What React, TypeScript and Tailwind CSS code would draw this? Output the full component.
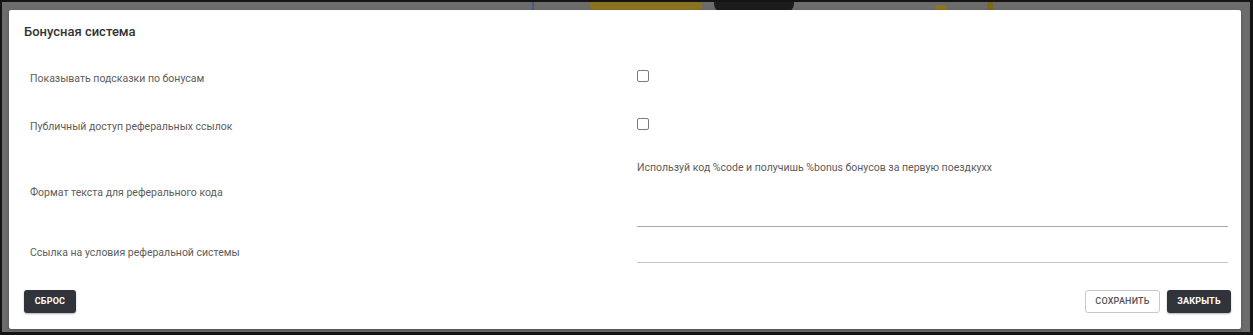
import React from 'react'

const font = { fontFamily: 'Roboto, "Noto Sans", Arial, sans-serif' }

function Checkbox() {
  return <span className="block w-[12px] h-[12px] rounded-[2px] border-[1.5px] border-[#7a7a7a] bg-white" />
}

function Row({ label, height, children }: { label: string; height: string; children?: React.ReactNode }) {
  return (
    <div className={`flex items-center ${height}`}>
      <div className="w-[607px] shrink-0 text-[10.5px] leading-[13px] text-[#5c5c5c]">{label}</div>
      <div className="flex-1 h-full flex items-center">{children}</div>
    </div>
  )
}

export default function App() {
  return (
    <div
      className="relative w-[1253px] h-[335px] overflow-hidden bg-[#6c6c6c] border-l-2 border-r-[3px] border-b-[3px] border-t-2 border-[#141414]"
      style={font}
    >
      {/* blurred picture behind the overlay */}
      <div className="absolute left-[530px] top-0 w-[2px] h-[10px] bg-[#3d5f8a]" />
      <div className="absolute left-[588px] top-0 w-[112px] h-[10px] rounded-b-[6px] bg-[#8a7320]" />
      <div className="absolute left-[712px] top-0 w-[80px] h-[10px] rounded-b-[8px] bg-[#1c1c1c]" />
      <div className="absolute left-[933px] top-[3px] w-[12px] h-[7px] rounded-full bg-[#8f7420]" />
      <div className="absolute left-[985px] top-0 w-[6px] h-[8px] bg-[#7d6818]" />

      <div className="relative ml-[7px] mt-[8px] w-[1232px] h-[319px] bg-white rounded-[2px] shadow-[0_1px_3px_rgba(0,0,0,0.3)] flex flex-col">
        <div className="h-[44px] pt-[14px] px-[15px] text-[13px] leading-[16px] font-medium text-[#333]">
          Бонусная система
        </div>

        <div className="pl-[21px] pr-[13px] flex flex-col">
          <Row label="Показывать подсказки по бонусам" height="h-[48px]">
            <div className="-mt-[4px]"><Checkbox /></div>
          </Row>
          <Row label="Публичный доступ реферальных ссылок" height="h-[48px]">
            <div className="-mt-[4px]"><Checkbox /></div>
          </Row>
          <div className="flex h-[84px] items-center">
            <div className="w-[607px] shrink-0 text-[10.5px] leading-[13px] text-[#5c5c5c]">
              Формат текста для реферального кода
            </div>
            <div className="flex-1 self-start h-[77px] pt-[11px] border-b border-[#a9a9a9] text-[10.5px] leading-[13px] text-[#5c5c5c]">
              Используй код %code и получишь %bonus бонусов за первую поездкухх
            </div>
          </div>
          <div className="flex h-[36px] items-center">
            <div className="w-[607px] shrink-0 text-[10.5px] leading-[13px] text-[#5c5c5c]">
              Ссылка на условия реферальной системы
            </div>
            <div className="flex-1 self-start h-[29px] border-b border-[#c4c4c4]" />
          </div>
        </div>

        <div className="flex items-start justify-between pt-[20px] pl-[15px] pr-[10px]">
          <button className="h-[23px] w-[52px] rounded-[3px] bg-[#30343a] text-white text-[9px] font-bold tracking-[0.2px] shadow-[0_1px_2px_rgba(0,0,0,0.3)]">
            СБРОС
          </button>
          <div className="flex gap-[7px]">
            <button className="h-[23px] w-[75px] rounded-[3px] border border-[#c9c9c9] bg-white text-[#555] text-[9px] font-medium tracking-[0.2px]">
              СОХРАНИТЬ
            </button>
            <button className="h-[23px] w-[64px] rounded-[3px] bg-[#30343a] text-white text-[9px] font-bold tracking-[0.2px] shadow-[0_1px_2px_rgba(0,0,0,0.3)]">
              ЗАКРЫТЬ
            </button>
          </div>
        </div>
      </div>
    </div>
  )
}
